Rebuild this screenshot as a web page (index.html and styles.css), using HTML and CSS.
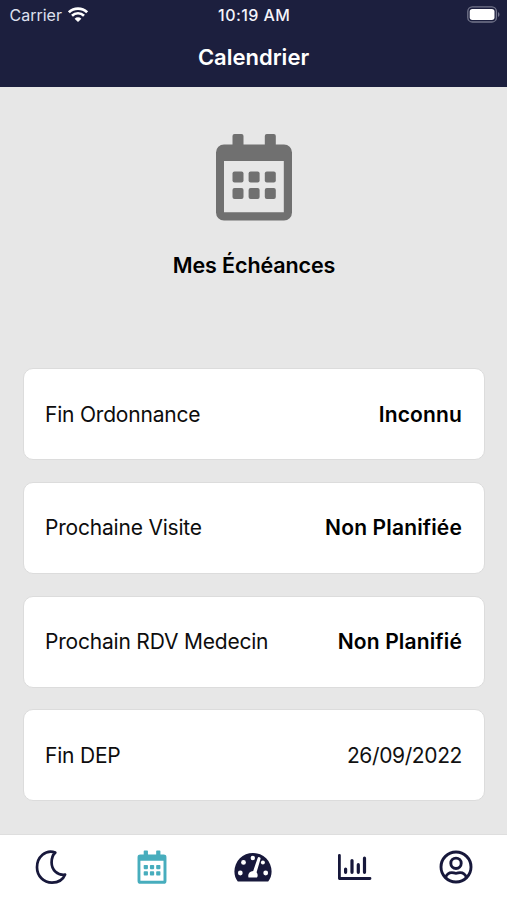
FILE: index.html
```html
<!DOCTYPE html>
<html lang="fr">
<head>
<meta charset="utf-8">
<title>Calendrier</title>
<link rel="stylesheet" href="styles.css">
</head>
<body>
<svg width="0" height="0" class="defs" aria-hidden="true">
  <symbol id="calendar" viewBox="0 0 76 88">
    <path fill="currentColor" fill-rule="evenodd" d="M16.500 11.500V3a2 2 0 0 1 2-2h7a2 2 0 0 1 2 2v8.500h21.300V3a2 2 0 0 1 2-2h7a2 2 0 0 1 2 2v8.500H68a8 8 0 0 1 8 8V79.500a8 8 0 0 1-8 8H8a8 8 0 0 1-8-8V19.500a8 8 0 0 1 8-8zM8 28V79.300H67.800V28z"/>
    <g fill="currentColor">
      <rect x="16.500" y="38.500" width="11" height="11" rx="2"/><rect x="32.600" y="38.500" width="11" height="11" rx="2"/><rect x="48.800" y="38.500" width="11" height="11" rx="2"/>
      <rect x="16.500" y="55" width="11" height="11" rx="2"/><rect x="32.600" y="55" width="11" height="11" rx="2"/><rect x="48.800" y="55" width="11" height="11" rx="2"/>
    </g>
  </symbol>
</svg>
<div class="app">
  <header class="header">
    <div class="status">
      <div class="network">
        <span class="carrier">Carrier</span>
        <svg width="20" height="15" viewBox="0 0 20 15" fill="none" stroke="#fff" stroke-width="2.700">
          <path d="M.9 5.300a13 13 0 0 1 18.200 0M4 8.700a8.600 8.600 0 0 1 12 0"/>
          <path d="M10 15l-3.400-3.300a4.900 4.900 0 0 1 6.800 0z" fill="#fff" stroke="none"/>
        </svg>
      </div>
      <span class="time">10:19 AM</span>
      <svg class="battery" width="33" height="17" viewBox="0 0 33 17">
        <rect x=".8" y=".8" width="28.600" height="15.200" rx="4.600" fill="none" stroke="#73758b" stroke-width="1.300"/>
        <rect x="2.700" y="2.900" width="24.800" height="11" rx="2.700" fill="#fff"/>
        <path d="M31 6v5c2-1 2-4 0-5z" fill="#73758b"/>
      </svg>
    </div>
    <h1 class="title">Calendrier</h1>
  </header>
  <main class="content">
    <svg class="hero" width="76" height="88"><use href="#calendar"/></svg>
    <h2 class="heading">Mes Échéances</h2>
    <div class="cards">
      <div class="card"><span class="label">Fin Ordonnance</span><span class="value">Inconnu</span></div>
      <div class="card"><span class="label">Prochaine Visite</span><span class="value">Non Planifiée</span></div>
      <div class="card"><span class="label">Prochain RDV Medecin</span><span class="value">Non Planifié</span></div>
      <div class="card"><span class="label">Fin DEP</span><span class="value date">26/09/2022</span></div>
    </div>
  </main>
  <nav class="tabs">
    <div class="tab"><svg width="36" height="38" viewBox="0 0 36 38" fill="none" stroke="currentColor" stroke-width="2.700" stroke-linejoin="round"><path d="M22.300 4.600C12.500 1 4 9.300 4 19.300c0 8.800 6.700 15.400 15 15.400 6 0 11-2.800 13.100-8.100-7.600 1-13.500-4.600-13.500-12.100 0-4.200 1.100-7.700 3.700-9.900z"/></svg></div>
    <div class="tab active"><svg width="30" height="34" viewBox="0 0 76 88"><use href="#calendar"/></svg></div>
    <div class="tab"><svg width="38" height="32" viewBox="0 0 38 32"><path fill="currentColor" d="M3.800 30.500C1.600 27.800.4 24.500.4 20.500a18.600 18.600 0 0 1 37.200 0c0 4-1.200 7.300-3.400 10z"/><g fill="#fff"><circle cx="6.300" cy="22" r="2.400"/><circle cx="9.500" cy="11.400" r="2.400"/><circle cx="18.800" cy="7" r="2.200"/><circle cx="28.900" cy="11.400" r="2"/><circle cx="31.700" cy="22" r="2.400"/><path d="M23.600 7.200a1.500 1.500 0 0 1 2.900.9l-3.900 13.200a4.700 4.700 0 0 1 .4 5.200h-8.500c-1-3.300.8-6.200 4.700-6.600z"/></g></svg></div>
    <div class="tab"><svg width="36" height="30" viewBox="0 0 36 30" fill="none" stroke="currentColor" stroke-width="2.800" stroke-linecap="round"><path stroke-linejoin="round" d="M2.400 3.300v23.200h30.600"/><path stroke-width="3.200" d="M8.600 17v3.300M15 8.500v11.800M21.300 12.700v7.600M27.500 6.200v14.100"/></svg></div>
    <div class="tab"><svg width="36" height="36" viewBox="0 0 36 36" fill="none" stroke="currentColor" stroke-width="2.900"><circle cx="18" cy="18" r="15"/><circle cx="18" cy="14.300" r="5.200"/><path d="M7.600 28.300c1.200-3.100 3.500-4.700 6.200-4.700 1.600 0 2.500.8 4.200.8s2.600-.8 4.200-.8c2.700 0 5 1.600 6.200 4.700"/></svg></div>
  </nav>
</div>
</body>
</html>
```
FILE: styles.css
```css
* { box-sizing: border-box; }
body { margin: 0; font-family: Inter, "Liberation Sans", sans-serif; color: #0d0d0d; }
.defs { display: none; }
.app { width: 507px; height: 900px; display: flex; flex-direction: column; background: #e7e7e7; overflow: hidden; }
.header { height: 87px; flex: none; background: #1c1f3e; color: #fff; }
.status { display: grid; grid-template-columns: 1fr auto 1fr; align-items: center; height: 30px; padding: 0 8px 0 9.500px; font-size: 16px; line-height: 20px; }
.network { display: flex; align-items: center; gap: 6.500px; }
.network svg { margin-top: -2px; }
.carrier { color: #dfe0ee; }
.time { font-weight: 500; color: #f4f4fa; letter-spacing: .45px; }
.battery { justify-self: end; margin: -2px -1px 0 0; }
.title { margin: 13px 0 0; text-align: center; font-size: 22px; line-height: 28px; font-weight: 600; }
.content { flex: 1; padding: 45.500px 22px 0 23px; display: flex; flex-direction: column; align-items: center; }
.hero { color: #707070; flex: none; margin-right: 1px; }
.heading { margin: 30.500px 0 89.200px; font-size: 21.500px; line-height: 28px; font-weight: 600; letter-spacing: -.12px; color: #000; }
.cards { width: 100%; display: flex; flex-direction: column; gap: 21.700px; }
.card { height: 92px; display: flex; align-items: center; justify-content: space-between; padding: 1px 22px 0 21px; background: #fff; border: 1px solid #dcdcdc; border-radius: 10px; font-size: 21px; line-height: 28px; white-space: nowrap; }
.label { letter-spacing: -.2px; }
.value { font-weight: 600; letter-spacing: .15px; color: #000; }
.date { font-weight: 400; letter-spacing: -.38px; color: #111; }
.tabs { height: 66px; flex: none; display: grid; grid-template-columns: repeat(5, 1fr); padding-bottom: 2px; background: #fff; border-top: 1px solid #dedede; color: #17183b; }
.tab { display: flex; align-items: center; justify-content: center; }
.tab svg { display: block; }
.active { color: #47adbd; }
```
